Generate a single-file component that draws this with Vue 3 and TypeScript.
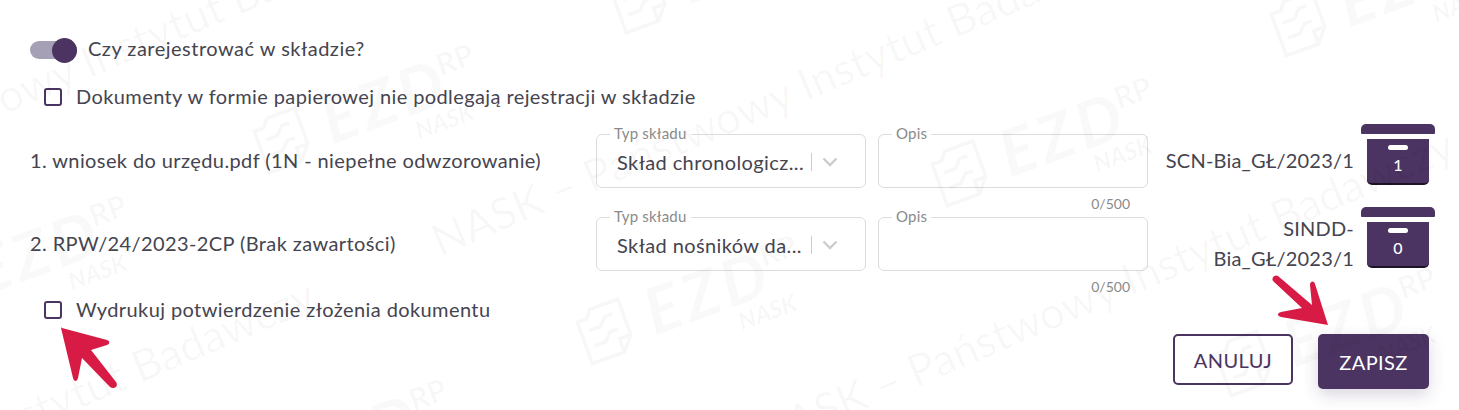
<script setup lang="ts">
type StoreRow = {
  name: string;
  type: string;
  code: string[];
  count: number;
};

const rows: StoreRow[] = [
  {
    name: "1. wniosek do urzędu.pdf (1N - niepełne odwzorowanie)",
    type: "Skład chronologicz...",
    code: ["SCN-Bia_GŁ/2023/1"],
    count: 1,
  },
  {
    name: "2. RPW/24/2023-2CP (Brak zawartości)",
    type: "Skład nośników da...",
    code: ["SINDD-", "Bia_GŁ/2023/1"],
    count: 0,
  },
];

// watermark tiles, read off the reference
const logos = [
  [283, 140],
  [961, 173],
  [606, 331],
  [1245, 363],
  [640, 0],
  [1300, 23],
  [-64, 291],
  [256, 475],
];
const lines = [
  [-277, 234],
  [440, 257],
  [764, 452],
  [-375, 602],
];
</script>

<template>
  <div class="page">
    <div class="toggle-row">
      <span class="toggle"><span class="knob"></span></span>
      <span class="toggle-label">Czy zarejestrować w składzie?</span>
    </div>

    <label class="check-row paper">
      <span class="box"></span>
      <span class="check-label">Dokumenty w formie papierowej nie podlegają rejestracji w składzie</span>
    </label>

    <div v-for="row in rows" :key="row.name" class="store-row">
      <div class="doc-name">{{ row.name }}</div>
      <div class="field">
        <span class="legend">Typ składu</span>
        <span class="value">{{ row.type }}</span>
        <span class="sep"></span>
        <svg class="chevron" width="16" height="10" viewBox="0 0 16 10">
          <path d="M1.5 1.5 8 8l6.5-6.5" fill="none" stroke="#ccc" stroke-width="2.4" />
        </svg>
      </div>
      <div class="opis">
        <div class="field">
          <span class="legend">Opis</span>
        </div>
        <div class="counter">0/500</div>
      </div>
      <div class="code">
        <span v-for="part in row.code" :key="part">{{ part }}</span>
      </div>
      <svg class="archive" width="74" height="62" viewBox="0 0 74 62">
        <path d="M0 10V6a5 5 0 0 1 5-5h64a5 5 0 0 1 5 5v4a1 1 0 0 1-1 1H1a1 1 0 0 1-1-1z" fill="#4b3461" />
        <path d="M6 16h62v41a5 5 0 0 1-5 5H11a5 5 0 0 1-5-5z" fill="#1d1226" />
        <path d="M6 16h62v40a4 4 0 0 1-4 4H10a4 4 0 0 1-4-4z" fill="#4b3461" />
        <rect x="27" y="22" width="20" height="5" rx="2.5" fill="#fff" />
        <text x="37" y="48" text-anchor="middle" class="archive-count">{{ row.count }}</text>
      </svg>
    </div>

    <label class="check-row print">
      <span class="box"></span>
      <span class="check-label">Wydrukuj potwierdzenie złożenia dokumentu</span>
    </label>

    <div class="actions">
      <button type="button" class="btn cancel">ANULUJ</button>
      <button type="button" class="btn save">ZAPISZ</button>
    </div>

    <svg class="watermark" width="1459" height="410" viewBox="0 0 1459 410">
      <text
        v-for="(l, i) in lines"
        :key="i"
        class="wm-line"
        :transform="`translate(${l[0]} ${l[1]}) rotate(-23)`"
      >NASK – Państwowy Instytut Badawczy</text>
      <g v-for="(p, i) in logos" :key="i" :transform="`translate(${p[0]} ${p[1]}) rotate(-20)`">
        <g fill="none" stroke="#000" stroke-opacity=".03" stroke-width="3.5">
          <path d="M-24-18h10l6-8h30v38L10 26h-34zM22 12H10v14" />
          <path d="M-16-6h12l8-8h8M-16 10h12l8-8h8" />
        </g>
        <text x="44" y="21" class="wm-ezd">EZD</text>
        <text x="170" y="-6" class="wm-rp">RP</text>
        <text x="128" y="46" class="wm-nask">NASK</text>
      </g>
    </svg>

    <svg class="arrow arrow-save" width="60" height="56" viewBox="1270 272 60 56">
      <path
        d="M1328 325 1315 284c-1-4-5-3-5 1l2 20-34-29c-3-2-7 2-5 5l29 27-21 4c-4 1-4 4 0 5z"
        fill="#d81b45"
      />
    </svg>
    <svg class="arrow arrow-print" width="60" height="66" viewBox="60 325 60 66">
      <path
        d="M62 328 107 340c3 1 3 4 0 5l-16 5 25 32c3 4-2 8-6 5l-28-29-4 20c-1 4-4 4-5 0l-12-50c0-1 0-1 1 0z"
        fill="#d81b45"
      />
    </svg>
  </div>
</template>

<style>
html,
body {
  background: #fff;
}
</style>

<style scoped>
.page {
  position: relative;
  box-sizing: border-box;
  width: 1459px;
  height: 410px;
  padding: 38px 30px 0;
  overflow: hidden;
  font-family: Lato, "Liberation Sans", sans-serif;
  font-size: 20px;
  letter-spacing: 0.4px;
  color: #45444f;
}

.toggle-row {
  display: flex;
  align-items: center;
  height: 24px;
  gap: 11px;
}

.toggle-label {
  margin-bottom: 4px;
  letter-spacing: 0.5px;
}

.toggle {
  display: block;
  position: relative;
  width: 47px;
  height: 18px;
  border-radius: 9px;
  background: #a5a0b5;
}

.knob {
  position: absolute;
  right: 0;
  top: -3px;
  width: 25px;
  height: 25px;
  border-radius: 50%;
  background: #4b3461;
}

.check-row {
  display: flex;
  align-items: center;
  height: 24px;
  gap: 14px;
  padding-left: 14px;
}

.check-label {
  margin-bottom: 2px;
}

.paper {
  margin-top: 23px;
  margin-bottom: 25px;
}

.print {
  margin-top: -2px;
}

.box {
  box-sizing: border-box;
  width: 18px;
  height: 18px;
  border: 2px solid #4b3461;
  border-radius: 3px;
}

.store-row {
  display: grid;
  grid-template-columns: 566px 270px 282px 206px 81px;
  height: 83px;
  align-items: start;
}

.doc-name {
  box-sizing: border-box;
  display: flex;
  align-items: center;
  height: 54px;
  padding-bottom: 2px;
  white-space: nowrap;
}

.field {
  position: relative;
  box-sizing: border-box;
  display: flex;
  align-items: center;
  height: 54px;
  padding: 2px 0 0 20px;
  border: 1px solid #dcdcdc;
  border-radius: 6px;
}

.legend {
  position: absolute;
  left: 13px;
  top: -10px;
  padding: 0 4px;
  background: #fff;
  font-size: 15px;
  line-height: 16px;
  letter-spacing: 0.2px;
  color: #8a8a8a;
}

.value {
  width: 194px;
  white-space: nowrap;
}

.sep {
  width: 1px;
  height: 18px;
  background: #ccc;
}

.chevron {
  margin-left: 10px;
}

.opis {
  margin-left: 12px;
}

.counter {
  margin-top: 8px;
  padding-right: 18px;
  text-align: right;
  font-size: 14px;
  line-height: 16px;
  letter-spacing: 0;
  color: #8a8a8a;
}

.code {
  box-sizing: border-box;
  display: flex;
  flex-direction: column;
  justify-content: center;
  align-items: flex-end;
  height: 54px;
  padding-bottom: 2px;
  line-height: 30px;
  letter-spacing: 0.2px;
}

.archive {
  margin: -11px 0 0 7px;
}

.archive-count {
  font-size: 16px;
  font-weight: 500;
  fill: #fff;
}

.actions {
  display: flex;
  justify-content: flex-end;
  align-items: flex-start;
  gap: 25px;
  margin-top: 12px;
}

.btn {
  box-sizing: border-box;
  font-family: inherit;
  font-size: 20px;
  letter-spacing: 0.4px;
  border-radius: 5px;
  padding: 0;
}

.cancel {
  width: 120px;
  height: 51px;
  border: 2px solid #4b3461;
  background: #fff;
  color: #4b3461;
}

.save {
  width: 111px;
  height: 55px;
  border: none;
  background: #4b3461;
  color: #fff;
  box-shadow: 0 6px 16px rgba(75, 52, 97, 0.2);
}

.watermark {
  position: absolute;
  left: 0;
  top: 0;
  pointer-events: none;
}

.wm-line {
  font-size: 44px;
  letter-spacing: 0;
  fill: rgba(0, 0, 0, 0.03);
}

.wm-ezd {
  font-size: 64px;
  font-weight: 700;
  font-style: italic;
  letter-spacing: 5px;
  fill: rgba(0, 0, 0, 0.025);
}

.wm-rp {
  font-size: 30px;
  font-weight: 700;
  letter-spacing: 0;
  fill: rgba(0, 0, 0, 0.03);
}

.wm-nask {
  font-size: 24px;
  font-weight: 700;
  font-style: italic;
  letter-spacing: 0;
  fill: rgba(0, 0, 0, 0.04);
}

.arrow {
  position: absolute;
  pointer-events: none;
}

.arrow-save {
  left: 1270px;
  top: 272px;
}

.arrow-print {
  left: 60px;
  top: 325px;
}
</style>
